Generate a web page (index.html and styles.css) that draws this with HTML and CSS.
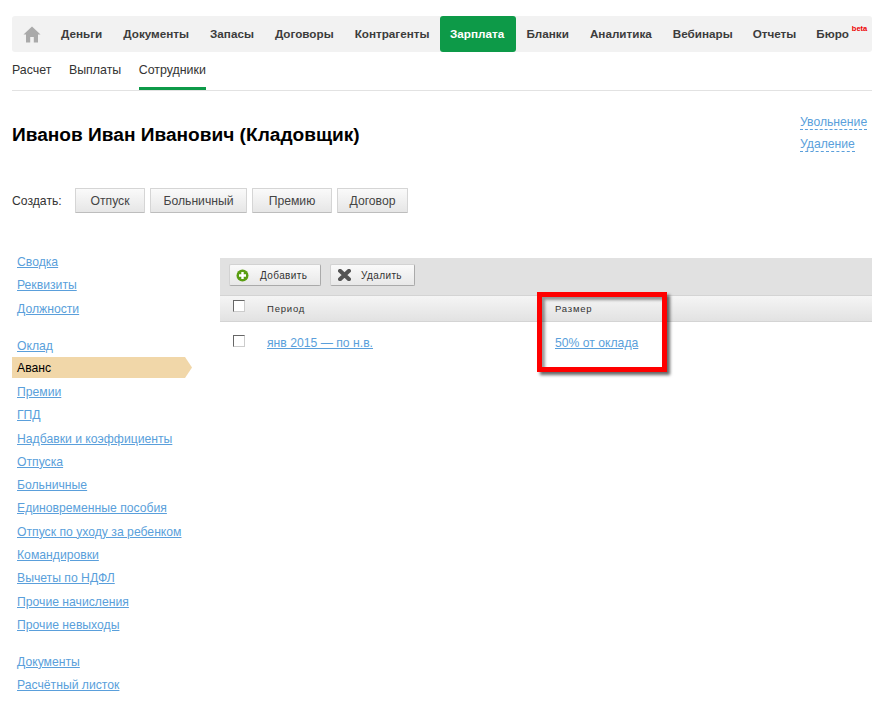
FILE: index.html
```html
<!DOCTYPE html>
<html lang="ru">
<head>
<meta charset="utf-8">
<title>Иванов Иван Иванович</title>
<link rel="stylesheet" href="styles.css">
</head>
<body>
<div class="page">
  <nav class="topnav">
    <a class="home" aria-label="Главная"><svg width="18" height="17" viewBox="0 0 18 17"><path d="M9 0.5 L0.5 8.5 L3 8.5 L3 16.5 L7.2 16.5 L7.2 11 L10.8 11 L10.8 16.5 L15 16.5 L15 8.5 L17.5 8.5 Z" fill="#aaaaaa"/></svg></a>
    <a class="item">Деньги</a>
    <a class="item">Документы</a>
    <a class="item">Запасы</a>
    <a class="item">Договоры</a>
    <a class="item">Контрагенты</a>
    <a class="item active">Зарплата</a>
    <a class="item">Бланки</a>
    <a class="item">Аналитика</a>
    <a class="item narrow">Вебинары</a>
    <a class="item narrow">Отчеты</a>
    <a class="item">Бюро<sup class="beta">beta</sup></a>
  </nav>
  <nav class="subnav">
    <a class="sub">Расчет</a>
    <a class="sub">Выплаты</a>
    <a class="sub current">Сотрудники</a>
  </nav>
  <header class="head">
    <h1>Иванов Иван Иванович (Кладовщик)</h1>
    <div class="actions">
      <a class="dash">Увольнение</a>
      <a class="dash">Удаление</a>
    </div>
  </header>
  <div class="create">
    <span class="create-label">Создать:</span>
    <button class="btn b1">Отпуск</button>
    <button class="btn b2">Больничный</button>
    <button class="btn b3">Премию</button>
    <button class="btn b4">Договор</button>
  </div>
  <div class="main">
    <aside class="side">
      <ul class="group lead">
        <li><a>Сводка</a></li>
        <li><a>Реквизиты</a></li>
        <li><a>Должности</a></li>
      </ul>
      <ul class="group">
        <li><a>Оклад</a></li>
        <li class="on"><span>Аванс</span></li>
        <li><a>Премии</a></li>
        <li><a>ГПД</a></li>
        <li><a>Надбавки и коэффициенты</a></li>
        <li><a>Отпуска</a></li>
        <li><a>Больничные</a></li>
        <li><a>Единовременные пособия</a></li>
        <li><a>Отпуск по уходу за ребенком</a></li>
        <li><a>Командировки</a></li>
        <li><a>Вычеты по НДФЛ</a></li>
        <li><a>Прочие начисления</a></li>
        <li><a>Прочие невыходы</a></li>
      </ul>
      <ul class="group">
        <li><a>Документы</a></li>
        <li><a>Расчётный листок</a></li>
      </ul>
    </aside>
    <section class="content">
      <div class="toolbar">
        <button class="tool add"><svg width="13" height="13" viewBox="0 0 13 13"><circle cx="6.5" cy="6.5" r="6" fill="#5a9e12"/><path d="M6.5 3 V10 M3 6.5 H10" stroke="#fff" stroke-width="2.4"/></svg><span>Добавить</span></button>
        <button class="tool del"><svg width="13" height="12" viewBox="0 0 13 12"><path d="M2 1.8 L11 10.2 M11 1.8 L2 10.2" stroke="#555" stroke-width="4" stroke-linecap="round"/></svg><span>Удалить</span></button>
      </div>
      <div class="grid thead">
        <span class="cell-check"><i class="check"></i></span>
        <span class="th">Период</span>
        <span class="th">Размер</span>
      </div>
      <div class="grid row">
        <span class="cell-check"><i class="check up"></i></span>
        <a class="link">янв 2015 — по н.в.</a>
        <a class="link">50% от оклада</a>
      </div>
      <div class="marker"></div>
    </section>
  </div>
</div>
</body>
</html>
```
FILE: styles.css
```css
* { box-sizing: border-box; }
html, body { margin: 0; padding: 0; background: #fff; }
body { font-family: "Liberation Sans", Arial, sans-serif; font-size: 12.2px; color: #333; }
ul { list-style: none; margin: 0; padding: 0; }
a { color: #5a9fdb; }

.page { padding: 16px 12px 0; height: 701px; overflow: hidden; }

.topnav { display: flex; height: 36px; background: #f2f2f2; border-radius: 3px; align-items: center; }
.home { width: 38.5px; padding-left: 11px; display: flex; align-items: center; }
.item { font-weight: bold; font-size: 11.7px; color: #3c3c3c; padding: 0 10.5px; line-height: 36px; height: 36px; position: relative; }
.item.narrow { padding-right: 9.5px; }
.item.active { background: #0d9a48; color: #fff; border-radius: 3px; padding: 0 10px; width: 76px; }
.beta { position: absolute; left: 46px; top: -5px; font-size: 7.5px; color: #e00; font-weight: bold; line-height: 36px; vertical-align: baseline; }

.subnav { display: flex; gap: 17.5px; height: 39px; border-bottom: 1px solid #e2e2e2; }
.sub { line-height: 36px; height: 38px; color: #333; font-size: 12.4px; }
.sub.current { border-bottom: 3px solid #0d9a48; }

.head { display: flex; justify-content: space-between; height: 97px; }
h1 { margin: 0; padding-top: 32px; font-size: 19.1px; line-height: 24px; color: #000; font-weight: bold; }
.actions { display: flex; flex-direction: column; align-items: flex-start; gap: 7px; padding-top: 24px; width: 72px; }
.dash { border-bottom: 1px dashed #5a9fdb; line-height: 15px; height: 15px; }

.create { display: flex; align-items: center; height: 25px; gap: 5px; }
.create-label { width: 58px; }
.btn { height: 25px; font: 12.2px "Liberation Sans", Arial, sans-serif; color: #444; padding: 0; background: linear-gradient(#fafafa, #e6e6e6); border: 1px solid #d5d5d5; border-bottom-color: #bdbdbd; border-radius: 1px; }
.b1 { width: 70px; }
.b2 { width: 97px; }
.b3 { width: 80px; }
.b4 { width: 71px; }

.main { display: flex; padding-top: 35px; }
.side { width: 208px; flex: none; padding-top: 3px; }
.group { margin-bottom: 13.5px; }
.group.lead { margin-bottom: 14.5px; }
.group li { height: 23.3px; line-height: 23.3px; padding-left: 5px; }
.group a { text-decoration: underline; }
.group li.on { width: 180px; height: 21px; line-height: 23px; margin-top: -1.7px; margin-bottom: 3px; color: #000; background: #f1d7a9; clip-path: polygon(0 0, 173px 0, 180px 50%, 173px 100%, 0 100%); }

.content { flex: 1; position: relative; margin-top: 10px; }
.toolbar { height: 37px; background: #e1e1e1; display: flex; padding: 6px 0 0 9px; gap: 9px; }
.tool { height: 22px; padding: 0; font: 10px "Liberation Sans", Arial, sans-serif; letter-spacing: 0.4px; color: #333; background: linear-gradient(#fafafa, #e8e8e8); border: 1px solid #d2d2d2; border-right-color: #aaa; border-bottom-color: #aaa; border-radius: 2px; display: flex; align-items: center; }
.tool.add { width: 92px; padding-left: 6px; gap: 11px; }
.tool.del { width: 85px; padding-left: 7px; gap: 10px; }

.grid { display: grid; grid-template-columns: 47px 288px 1fr; }
.cell-check { padding-left: 13px; }
.check { display: block; width: 12px; height: 12px; background: #fff; border: 1px solid #666; border-right-color: #ccc; border-bottom-color: #ccc; }
.check.up { margin-top: -1px; }
.thead { height: 27px; align-items: center; background: linear-gradient(#f5f5f5, #e2e2e2); border-top: 1px solid #d4d4d4; border-bottom: 1px solid #d4d4d4; }
.thead .cell-check { margin-top: -5px; }
.th { font-size: 9.5px; letter-spacing: 0.8px; color: #333; }
.row { padding-top: 14px; line-height: 14px; }
.link { text-decoration: underline; }

.marker { position: absolute; left: 317px; top: 34px; width: 130px; height: 80px; border: 5px solid #f00; box-shadow: 3px 3px 3px rgba(0,0,0,.6), inset 3px 3px 3px rgba(0,0,0,.4); }
```
